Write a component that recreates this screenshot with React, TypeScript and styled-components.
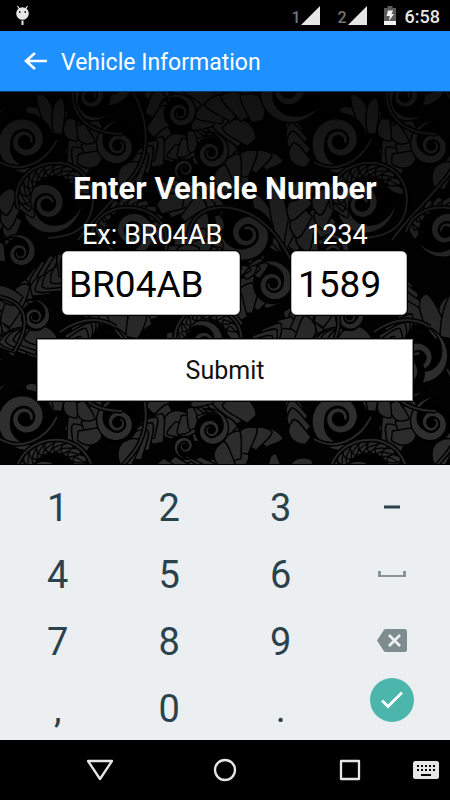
import React from "react";
import styled, { createGlobalStyle, css } from "styled-components";

const GlobalStyle = createGlobalStyle`
  *, *::before, *::after { box-sizing: border-box; }
  body { margin: 0; background: #000; font-family: Roboto, sans-serif; }
  button, input { font-family: inherit; }
`;

const Screen = styled.div`
  display: flex;
  flex-direction: column;
  min-height: 100vh;
  background: #000;
`;

const StatusBar = styled.div`
  display: flex;
  align-items: center;
  justify-content: space-between;
  height: 31px;
  padding: 0 10px 0 15px;
  color: #e6e6e6;
`;

const StatusGroup = styled.div`
  display: flex;
  align-items: center;
`;

const Signal = styled.span`
  display: flex;
  align-items: center;
  gap: 1px;
  margin-right: 17px;
  color: #757575;
  font-size: 16px;
  font-weight: 500;
  line-height: 20px;
`;

const SignalNumber = styled.span`
  padding-top: 4px;
`;

const Clock = styled.time`
  margin-left: 9px;
  padding-top: 2px;
  font-size: 18px;
  font-weight: 500;
  line-height: 20px;
`;

const AppBar = styled.header`
  display: flex;
  align-items: center;
  gap: 13px;
  height: 61px;
  padding: 0 24px;
  background: #1e90ff;
  border-bottom: 1px solid #0b3a66;
  color: #fff;
`;

const BackButton = styled.button`
  display: flex;
  padding: 0;
  border: 0;
  background: none;
  color: inherit;
`;

const AppTitle = styled.h1`
  margin: 0;
  padding-top: 3px;
  font-size: 23px;
  font-weight: 400;
  line-height: 28px;
`;

const Main = styled.main`
  position: relative;
  flex: 1;
  overflow: hidden;
  padding: 77px 37px 60px;
  border-bottom: 1px solid #000;
  color: #fff;
`;

const Backdrop = styled.svg`
  position: absolute;
  inset: 0;
  width: 100%;
  height: 100%;
`;

const VehicleForm = styled.form`
  position: relative;
  display: flex;
  flex-direction: column;
`;

const FormHeading = styled.h2`
  margin: 0 0 10px;
  font-size: 31px;
  font-weight: 700;
  line-height: 40px;
  text-align: center;
`;

const Fields = styled.div`
  display: grid;
  grid-template-columns: 178fr 116fr;
  gap: 51px;
  margin: 0 6px 24px 25px;
`;

const Field = styled.label<{ $indent: number }>`
  display: flex;
  flex-direction: column;
  min-width: 0;
  font-size: 27px;
  line-height: 32px;
  white-space: nowrap;

  span { padding-left: ${(p) => p.$indent}px; }
`;

const Entry = styled.input`
  width: 100%;
  height: 64px;
  padding: 3px 6px 0;
  border: 1px solid #b5b8b5;
  border-radius: 5px;
  outline: 1px solid #000;
  background: #fff;
  color: #000;
  font-size: 37px;
`;

const SubmitButton = styled.button`
  height: 62px;
  padding: 1px 0 0;
  border: 1px solid #8d918d;
  outline: 1px solid #000;
  background: #fff;
  color: #111;
  font-size: 25px;
`;

const Keyboard = styled.div`
  display: grid;
  grid-template-columns: repeat(4, 1fr);
  grid-auto-rows: 67px;
  padding: 8px 2px 0;
  height: 275px;
  background: #eceff1;
`;

const keyBase = css`
  display: flex;
  align-items: center;
  justify-content: center;
  padding: 0;
  border: 0;
  background: none;
`;

const Key = styled.button`
  ${keyBase}
  padding-top: 2px;
  color: #2a424c;
  font-size: 38px;
  line-height: 44px;

  svg { margin-bottom: 2px; }
`;

const DoneKey = styled.button`
  ${keyBase}
  place-self: start center;
  width: 44px;
  height: 44px;
  margin-top: 4px;
  border-radius: 50%;
  background: #4db6ac;
`;

const NavBar = styled.nav`
  display: grid;
  grid-template-columns: 1fr 125px 125px 125px 1fr;
  align-items: center;
  height: 60px;
  background: #000;
`;

const NavButton = styled.button<{ $start?: boolean }>`
  ${keyBase}
  justify-content: ${(p) => (p.$start ? "flex-start" : "center")};
  height: 60px;
`;

/* ---- Ornamental scroll-work backdrop ---- */

const TILE_W = 314;
const TILE_H = 277;

const rad = (deg: number) => (deg * Math.PI) / 180;
const pt = (x: number, y: number) => `${x.toFixed(1)} ${y.toFixed(1)}`;

/** A band that winds inwards and ends in a bulb. */
function scroll(cx: number, cy: number, r: number, start: number, dir: 1 | -1, turns = 2) {
  const outer: string[] = [];
  const inner: string[] = [];
  const steps = 70;
  for (let i = 0; i <= steps; i++) {
    const t = (i / steps) * turns;
    const a = rad(start + dir * t * 360);
    const ro = r * Math.pow(0.46, t);
    const ri = ro * (1 - 0.48 * Math.min(1, t * 2.4));
    outer.push(pt(cx + ro * Math.cos(a), cy + ro * Math.sin(a)));
    inner.unshift(pt(cx + ri * Math.cos(a), cy + ri * Math.sin(a)));
  }
  return `M${outer.join("L")}L${inner.join("L")}Z`;
}

/** A plump leaf that grows from (x, y) and curls towards one side. */
function leaf(x: number, y: number, angle: number, len: number, w: number, bend: number) {
  const a = rad(angle);
  const at = (u: number, v: number) =>
    pt(x + u * Math.cos(a) - v * Math.sin(a), y + u * Math.sin(a) + v * Math.cos(a));
  const s = bend < 0 ? -1 : 1;
  return (
    `M${at(0, -s * w * 0.4)}C${at(len * 0.4, -s * w * 1.1)} ${at(len * 1.05, -s * w)} ${at(len, bend)}` +
    `C${at(len * 0.85, bend + s * w * 0.3)} ${at(len * 0.5, s * w * 0.9)} ${at(0, s * w * 0.6)}Z`
  );
}

type Fern = [number, number, number, number, number, number, number, number, 1 | -1];

/** Leaves along one side of a curve: start, control, end, count, length, side. */
function fern([x0, y0, cx, cy, x1, y1, n, len, side]: Fern) {
  return Array.from({ length: n }, (_, i) => {
    const t = 1 - i / n;
    const x = (1 - t) * (1 - t) * x0 + 2 * t * (1 - t) * cx + t * t * x1;
    const y = (1 - t) * (1 - t) * y0 + 2 * t * (1 - t) * cy + t * t * y1;
    const dx = (1 - t) * (cx - x0) + t * (x1 - cx);
    const dy = (1 - t) * (cy - y0) + t * (y1 - cy);
    const dir = (Math.atan2(dy, dx) * 180) / Math.PI;
    const size = len * (0.55 + 0.45 * Math.sin(Math.PI * (0.15 + 0.75 * t)));
    return leaf(x, y, dir + side * (70 - 45 * t), size, len * 0.36, -side * len * 0.38);
  });
}

const ferns: Fern[] = [
  [95, 92, 62, 78, 72, 52, 4, 30, 1],
  [70, 76, 88, 60, 86, 38, 4, 26, 1],
  [60, 6, 68, 38, 104, 38, 5, 22, 1],
  [150, 78, 150, 40, 150, 8, 4, 30, 1],
  [150, 84, 162, 62, 192, 66, 4, 30, -1],
  [148, 96, 176, 86, 208, 94, 5, 27, 1],
  [112, 100, 140, 96, 148, 70, 4, 30, -1],
  [196, 8, 198, 36, 180, 54, 5, 22, -1],
  [262, 46, 240, 58, 210, 40, 5, 34, 1],
  [270, 34, 240, 20, 214, 28, 5, 32, 1],
  [226, 110, 230, 78, 214, 62, 5, 29, 1],
  [228, 108, 232, 84, 262, 74, 5, 28, -1],
  [306, 84, 312, 60, 300, 42, 4, 26, -1],
  [8, 86, 22, 110, 16, 140, 4, 26, 1],
  [4, 84, -12, 110, -2, 150, 5, 27, 1],
  [82, 158, 58, 158, 40, 178, 5, 29, -1],
  [92, 160, 84, 190, 52, 196, 5, 31, 1],
  [150, 110, 170, 130, 202, 118, 5, 29, -1],
  [158, 168, 182, 150, 188, 118, 5, 33, 1],
  [166, 178, 196, 178, 218, 160, 5, 31, -1],
  [218, 216, 196, 198, 172, 200, 5, 31, 1],
  [200, 200, 236, 206, 250, 172, 5, 27, 1],
  [240, 246, 236, 220, 262, 212, 5, 31, -1],
  [248, 250, 276, 244, 292, 216, 5, 31, 1],
  [310, 190, 302, 216, 318, 244, 5, 29, -1],
  [306, 262, 286, 236, 298, 200, 5, 29, 1],
  [60, 240, 34, 246, 28, 214, 5, 34, -1],
  [64, 246, 44, 262, 20, 256, 5, 33, 1],
  [104, 238, 72, 212, 66, 186, 5, 33, 1],
  [112, 238, 110, 216, 96, 200, 4, 33, -1],
  [142, 246, 150, 222, 172, 206, 5, 37, -1],
  [140, 280, 160, 246, 186, 236, 5, 33, 1],
  [150, 276, 180, 284, 204, 266, 5, 31, 1],
  [232, 282, 236, 258, 262, 244, 5, 29, 1],
  [62, 276, 58, 250, 80, 236, 5, 29, 1],
];

/** Slim petals: base x, base y, angle, length, width, curl. */
const petals: [number, number, number, number, number, number][] = [
  [54, 42, -135, 38, 10, -3],
  [55, 41, -112, 42, 9, -3],
  [57, 42, -85, 36, 8, 3],
  [282, 158, -138, 46, 10, 3],
  [284, 158, -118, 62, 11, 3],
  [286, 158, -100, 74, 11, 3],
  [290, 158, -78, 72, 11, -3],
  [293, 158, -58, 54, 10, -3],
  [126, 246, -110, 46, 12, 3],
  [133, 246, -80, 48, 12, -3],
  [4, 232, -60, 46, 11, 3],
  [20, 210, -150, 28, 10, 3],
];

const stems = [
  "M74 -8C68 22 88 42 122 42",
  "M133 0C150 30 151 65 130 88C112 110 92 128 78 148",
  "M18 116C10 88 35 68 62 71C84 75 98 94 91 121C86 137 72 145 48 146",
  "M0 70C20 82 45 72 57 48",
  "M188 148C190 112 224 110 250 122C270 132 286 154 298 184",
  "M92 140C100 110 145 108 162 132C174 154 160 180 145 188",
  "M175 251C172 215 215 202 237 231C248 252 238 274 212 280",
  "M60 240C80 226 98 224 116 235",
  "M0 205C24 210 34 228 14 260",
  "M235 268C250 240 288 250 315 268",
];

const scrolls: [number, number, number, number, 1 | -1][] = [
  [25, 49, 38, 20, 1],
  [118, 54, 27, -70, -1],
  [47, 112, 36, -10, 1],
  [132, 139, 31, 170, -1],
  [247, 142, 36, -120, -1],
  [273, 192, 27, 200, 1],
  [211, 61, 22, -110, 1],
  [180, 21, 22, 200, 1],
  [90, 4, 28, 30, 1],
  [287, -2, 38, 15, 1],
  [20, 161, 21, -150, 1],
  [205, 250, 26, 180, 1],
  [105, 267, 34, -80, 1],
  [185, 77, 14, 60, 1],
  [35, 225, 19, -120, 1],
];

/** Comb of short leaves inside a ring: cx, cy, radius, from, to, count, length. */
const combs: [number, number, number, number, number, number, number][] = [
  [54, 107, 36, -190, -10, 12, 19],
  [130, 142, 36, -165, 10, 11, 15],
  [207, 248, 33, -185, 0, 11, 17],
  [250, 146, 40, 80, 215, 9, 17],
];

function comb([cx, cy, r, from, to, n, len]: (typeof combs)[number]) {
  return Array.from({ length: n }, (_, i) => {
    const d = from + ((to - from) * i) / (n - 1);
    return leaf(cx + r * Math.cos(rad(d)), cy + r * Math.sin(rad(d)), d + 215, len, 5, 5);
  });
}

const offsets = [-1, 0, 1, 2, 3];

function ScrollWork() {
  return (
    <Backdrop aria-hidden="true">
      <defs>
        <linearGradient id="shade" x1="0" y1="0" x2="0" y2="1">
          <stop offset="0" stopColor="#000" stopOpacity="0.64" />
          <stop offset="0.35" stopColor="#000" stopOpacity="0.34" />
          <stop offset="0.7" stopColor="#000" stopOpacity="0.08" />
          <stop offset="1" stopColor="#000" stopOpacity="0.05" />
        </linearGradient>
        <g id="motif" strokeLinejoin="round">
          <g fill="#2e2e2e" stroke="#000" strokeWidth="1.4">
            {ferns.map((f, i) => (
              <g key={i}>
                {fern(f).map((d) => (
                  <path key={d} d={d} />
                ))}
              </g>
            ))}
            {petals.map((p) => (
              <path key={p.join()} d={leaf(...p)} />
            ))}
          </g>
          {scrolls.map(([x, y, r, a, dir], i) => (
            <g key={i}>
              <circle cx={x} cy={y} r={r * 0.75} fill="#000" />
              <path d={scroll(x, y, r, a, dir)} fill="#313131" stroke="#000" strokeWidth="1.4" />
            </g>
          ))}
          {combs.map((c, i) => (
            <path key={i} d={comb(c).join("")} fill="#2e2e2e" stroke="#000" strokeWidth="1.3" />
          ))}
          {stems.map((d) => (
            <g key={d} fill="none">
              <path d={d} stroke="#000" strokeWidth="5" />
              <path d={d} stroke="#2a2a2a" strokeWidth="2" />
            </g>
          ))}
        </g>
      </defs>
      <rect width="100%" height="100%" fill="#020202" />
      {offsets.map((row) =>
        offsets.map((col) => (
          <use key={`${row}-${col}`} href="#motif" x={col * TILE_W} y={row * TILE_H} />
        ))
      )}
      <rect width="100%" height="100%" fill="url(#shade)" />
    </Backdrop>
  );
}

/* ---- Icons ---- */

const DebugIcon = () => (
  <svg width="15" height="21" viewBox="0 0 15 21" aria-hidden="true">
    <path d="M2.500 1l2 3M12.500 1l-2 3" stroke="#e6e6e6" strokeWidth="1.200" />
    <circle cx="7.500" cy="8.500" r="6.300" fill="#e6e6e6" />
    <circle cx="4.800" cy="7" r="0.900" fill="#222" />
    <circle cx="10.200" cy="7" r="0.900" fill="#222" />
    <path d="M7.500 15.500V20" stroke="#e6e6e6" strokeWidth="2" />
  </svg>
);

const SignalIcon = () => (
  <svg width="19" height="19" viewBox="0 0 19 19" aria-hidden="true">
    <path d="M19 0V19H0Z" fill="#e6e6e6" />
  </svg>
);

const BatteryIcon = () => (
  <svg width="12" height="19" viewBox="0 0 12 19" aria-hidden="true">
    <path d="M3.500 0h5v2H12v17H0V2h3.500z" fill="#5b5b5b" />
    <path d="M0 15h12v4H0z" fill="#f2f2f2" />
    <path d="M4 4.500h5L7.500 8H10L5 15l.8-5H2.500z" fill="#f2f2f2" />
  </svg>
);

const BackIcon = () => (
  <svg width="24" height="18" viewBox="0 0 24 18" fill="none" stroke="currentColor" strokeWidth="2.600" aria-hidden="true">
    <path d="M23 9H2M11 1L2 9l9 8" />
  </svg>
);

const DashIcon = () => (
  <svg width="16" height="4" viewBox="0 0 16 4" aria-hidden="true">
    <path d="M0 .5h16v3H0z" fill="#2a424c" />
  </svg>
);

const SpaceIcon = () => (
  <svg width="28" height="6" viewBox="0 0 28 6" aria-hidden="true">
    <path d="M0 0h3v4h22V0h3v6H0z" fill="#87969a" />
  </svg>
);

const DeleteIcon = () => (
  <svg width="30" height="23" viewBox="0 0 30 23" aria-hidden="true">
    <path d="M9 0h18.500Q30 0 30 2.500v18Q30 23 27.500 23H9Q7.500 23 6.700 21.800L0 11.500 6.700 1.200Q7.500 0 9 0z" fill="#7f8c8f" />
    <path d="M12 6l11 11M23 6L12 17" stroke="#eceff1" strokeWidth="2.800" />
  </svg>
);

const CheckIcon = () => (
  <svg width="24" height="20" viewBox="0 0 24 20" fill="none" aria-hidden="true">
    <path d="M2 10.500l6 6L22 2.500" stroke="#fff" strokeWidth="2.800" />
  </svg>
);

const NavIcon = ({ children }: { children: React.ReactNode }) => (
  <svg width="28" height="24" viewBox="0 0 28 24" fill="none" stroke="#e6e6e6" strokeWidth="2.300" strokeLinejoin="round" aria-hidden="true">
    {children}
  </svg>
);

const KeyboardIcon = () => (
  <svg width="26" height="18" viewBox="0 0 26 18" aria-hidden="true">
    <rect width="26" height="18" rx="2.500" fill="#e6e6e6" />
    {[4, 8].map((y) =>
      [4, 8, 12, 16, 20].map((x) => <rect key={`${x}-${y}`} x={x} y={y} width="2" height="2" fill="#000" />)
    )}
    <rect x="8" y="13" width="10" height="2" fill="#000" />
  </svg>
);

const keys: { name: string; face: React.ReactNode }[] = [
  { name: "1", face: "1" },
  { name: "2", face: "2" },
  { name: "3", face: "3" },
  { name: "Minus", face: <DashIcon /> },
  { name: "4", face: "4" },
  { name: "5", face: "5" },
  { name: "6", face: "6" },
  { name: "Space", face: <SpaceIcon /> },
  { name: "7", face: "7" },
  { name: "8", face: "8" },
  { name: "9", face: "9" },
  { name: "Delete", face: <DeleteIcon /> },
  { name: "Comma", face: "," },
  { name: "0", face: "0" },
  { name: "Period", face: "." },
];

export default function App() {
  return (
    <Screen>
      <GlobalStyle />
      <StatusBar>
        <DebugIcon />
        <StatusGroup>
          <Signal><SignalNumber>1</SignalNumber><SignalIcon /></Signal>
          <Signal><SignalNumber>2</SignalNumber><SignalIcon /></Signal>
          <BatteryIcon />
          <Clock>6:58</Clock>
        </StatusGroup>
      </StatusBar>
      <AppBar>
        <BackButton type="button" aria-label="Back"><BackIcon /></BackButton>
        <AppTitle>Vehicle Information</AppTitle>
      </AppBar>
      <Main>
        <ScrollWork />
        <VehicleForm onSubmit={(e) => e.preventDefault()}>
          <FormHeading>Enter Vehicle Number</FormHeading>
          <Fields>
            <Field $indent={20}>
              <span>Ex: BR04AB</span>
              <Entry name="series" defaultValue="BR04AB" />
            </Field>
            <Field $indent={16}>
              <span>1234</span>
              <Entry name="number" inputMode="numeric" defaultValue="1589" />
            </Field>
          </Fields>
          <SubmitButton type="submit">Submit</SubmitButton>
        </VehicleForm>
      </Main>
      <Keyboard>
        {keys.map((k) => (
          <Key key={k.name} type="button" aria-label={k.name}>{k.face}</Key>
        ))}
        <DoneKey type="button" aria-label="Done"><CheckIcon /></DoneKey>
      </Keyboard>
      <NavBar>
        <span />
        <NavButton type="button" aria-label="Back">
          <NavIcon><path d="M2 3h24L14 21z" /></NavIcon>
        </NavButton>
        <NavButton type="button" aria-label="Home">
          <NavIcon><circle cx="14" cy="12" r="10" /></NavIcon>
        </NavButton>
        <NavButton type="button" aria-label="Recent apps">
          <NavIcon><path d="M5 3h18v18H5z" /></NavIcon>
        </NavButton>
        <NavButton type="button" aria-label="Switch keyboard" $start><KeyboardIcon /></NavButton>
      </NavBar>
    </Screen>
  );
}
